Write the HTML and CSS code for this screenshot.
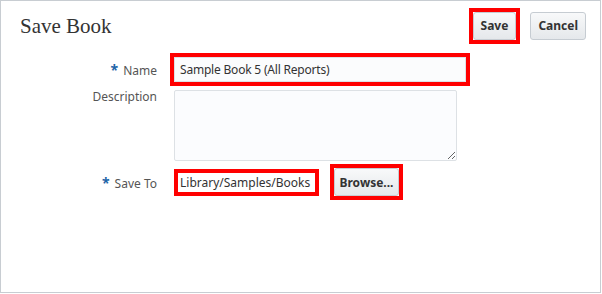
FILE: index.html
```html
<!DOCTYPE html>
<html lang="en">
  <head>
    <meta charset="UTF-8" />
    <title>Save Book</title>
    <link rel="stylesheet" href="styles.css">
  </head>
  <body>
    <div class="dialog">
      <div class="dialog-header">
        <h1 class="dialog-title">Save Book</h1>
        <div class="dialog-actions">
          <span class="marked"><button class="btn">Save</button></span>
          <button class="btn">Cancel</button>
        </div>
      </div>

      <div class="form">
        <label class="form-label" for="name"><span class="required">*</span>Name</label>
        <div class="form-field">
          <span class="marked"><input type="text" id="name" class="text-input" value="Sample Book 5 (All Reports)" /></span>
        </div>

        <label class="form-label label-top" for="description">Description</label>
        <div class="form-field">
          <textarea id="description" class="text-area"></textarea>
        </div>

        <label class="form-label"><span class="required">*</span>Save To</label>
        <div class="form-field path-row">
          <span class="path marked">Library/Samples/Books</span>
          <span class="marked"><button class="btn browse-btn">Browse...</button></span>
        </div>
      </div>
    </div>
  </body>
</html>
```

FILE: styles.css
```css
body {
  margin: 0;
  font-family: "Noto Sans", Arial, sans-serif;
  background-color: #fff;
}

.dialog {
  width: 601px;
  height: 293px;
  box-sizing: border-box;
  border: 1px solid #c8cdd2;
  background-color: #fff;
}

.dialog-header {
  display: flex;
  justify-content: space-between;
  align-items: center;
  padding: 10px 14px 0 19px;
}

.dialog-title {
  margin: 0;
  padding-top: 1px;
  font-family: "Liberation Serif", "Times New Roman", serif;
  font-size: 21px;
  font-weight: normal;
  line-height: 28px;
  color: #333;
}

.dialog-actions {
  display: flex;
  gap: 14px;
}

.btn {
  display: block;
  height: 28px;
  padding: 0 7px;
  font-family: "Noto Sans", Arial, sans-serif;
  font-size: 12px;
  font-weight: bold;
  color: #333;
  background: linear-gradient(#f8f9fa, #e5e8eb);
  border: 1px solid #c6ccd2;
  border-radius: 3px;
  cursor: pointer;
}

/* red highlight frames */
.marked {
  display: block;
  outline: 4px solid #f00;
}

.form {
  display: grid;
  grid-template-columns: 137px auto;
  column-gap: 17px;
  row-gap: 8px;
  margin-top: 17px;
  padding-left: 19px;
  align-items: center;
}

.form-label {
  text-align: right;
  font-size: 12px;
  color: #555;
}

.label-top {
  align-self: start;
  margin-top: -2px;
}

.required {
  color: #1f65a8;
  font-weight: bold;
  font-size: 14px;
  margin-right: 5px;
}

.form-field .marked {
  width: max-content;
}

.text-input {
  width: 292px;
  height: 25px;
  box-sizing: border-box;
  padding: 0 5px;
  font-family: "Noto Sans", Arial, sans-serif;
  font-size: 12px;
  letter-spacing: -0.2px;
  color: #333;
  background-color: #fbfcfd;
  border: 1px solid #dde2e6;
  display: block;
}

.text-area {
  width: 283px;
  height: 71px;
  box-sizing: border-box;
  display: block;
  background-color: #fbfcfe;
  border: 1px solid #dde1e5;
  border-radius: 2px;
}

.path-row {
  display: flex;
  align-items: center;
  gap: 19px;
  margin-top: -1px;
}

.path-row .path {
  margin-left: 4px;
  width: 137px;
  box-sizing: border-box;
  padding-left: 2px;
  line-height: 19px;
  font-size: 12px;
  color: #333;
  white-space: nowrap;
}

.browse-btn {
  width: 65px;
  padding: 0;
}
```
